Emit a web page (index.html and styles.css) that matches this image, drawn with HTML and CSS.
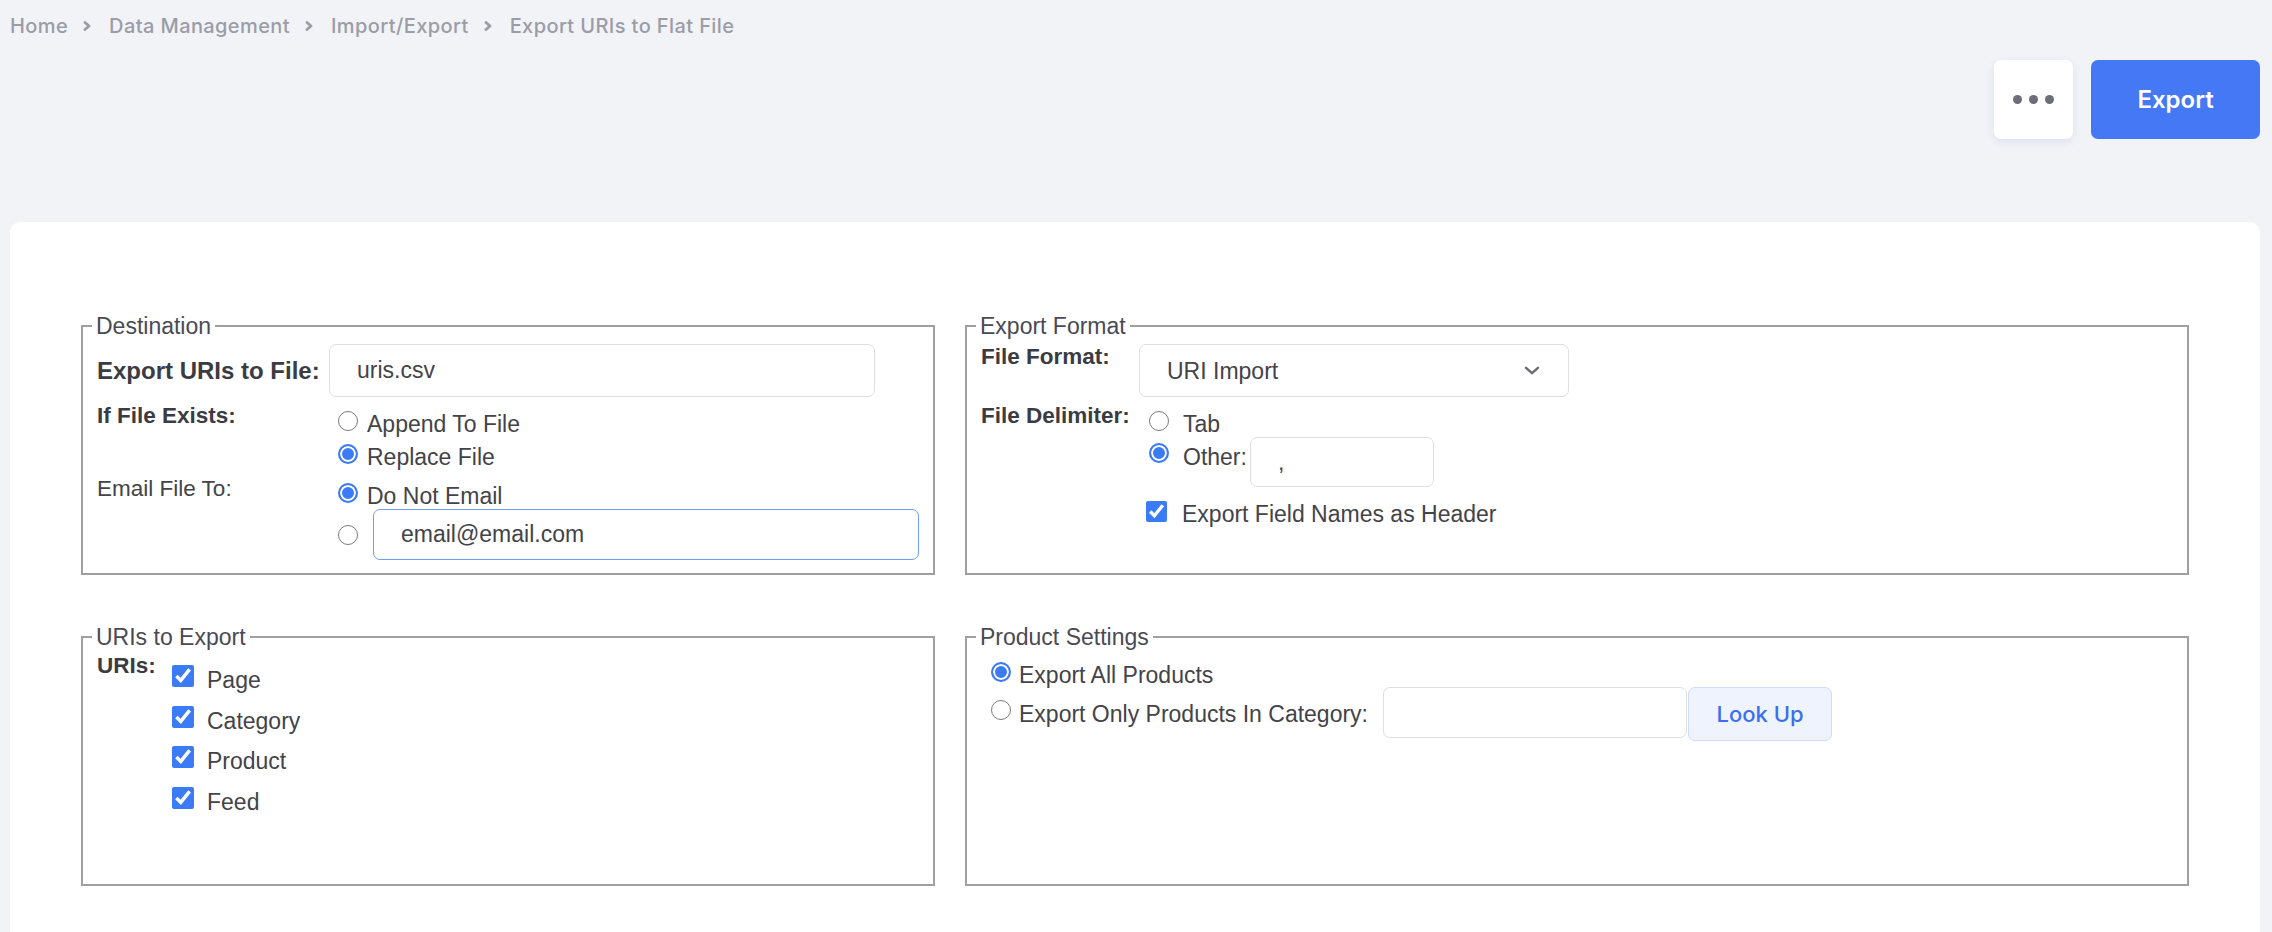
FILE: index.html
```html
<!DOCTYPE html>
<html lang="en">
<head>
    <meta charset="UTF-8">
    <meta name="viewport" content="width=device-width, initial-scale=1.0">
    <title>Export URIs to Flat File</title>
    <link rel="stylesheet" href="styles.css">
</head>
<body>
    <div class="page">
        <nav class="breadcrumb">
            <a href="#">Home</a>
            <svg class="crumb-sep" viewBox="0 0 8 10"><path d="M2 1.5 L6 5 L2 8.5"/></svg>
            <a href="#">Data Management</a>
            <svg class="crumb-sep" viewBox="0 0 8 10"><path d="M2 1.5 L6 5 L2 8.5"/></svg>
            <a href="#">Import/Export</a>
            <svg class="crumb-sep" viewBox="0 0 8 10"><path d="M2 1.5 L6 5 L2 8.5"/></svg>
            <span>Export URIs to Flat File</span>
        </nav>

        <div class="page-actions">
            <button type="button" class="btn-more"><span></span><span></span><span></span></button>
            <button type="button" class="btn-primary">Export</button>
        </div>

        <div class="card">
            <div class="form-grid">
                <!-- where the file goes -->
                <fieldset class="box">
                    <legend>Destination</legend>
                    <div class="dest-grid">
                        <label class="field-label field-label-lg" for="export-file">Export URIs to File:</label>
                        <input id="export-file" class="text-input wide" type="text" value="uris.csv">

                        <span class="field-label">If File Exists:</span>
                        <div class="options">
                            <label class="option"><input type="radio" name="exists"><span>Append To File</span></label>
                            <label class="option"><input type="radio" name="exists" checked><span>Replace File</span></label>
                        </div>

                        <span class="field-label plain">Email File To:</span>
                        <div class="options options-email">
                            <label class="option"><input type="radio" name="email" checked><span>Do Not Email</span></label>
                            <div class="option option-input">
                                <input type="radio" name="email">
                                <input class="text-input wide email-input" type="text" value="email@email.com">
                            </div>
                        </div>
                    </div>
                </fieldset>

                <fieldset class="box">
                    <legend>Export Format</legend>
                    <div class="format-grid">
                        <span class="field-label">File Format:</span>
                        <div class="select-wrap">
                            <select class="text-input select">
                                <option>URI Import</option>
                            </select>
                            <svg class="select-arrow" viewBox="0 0 16 9"><path d="M2 1.8 L8 7.2 L14 1.8"/></svg>
                        </div>

                        <span class="field-label">File Delimiter:</span>
                        <div class="options delim-options">
                            <label class="option"><input type="radio" name="delim"><span>Tab</span></label>
                            <div class="option option-other">
                                <input type="radio" name="delim" checked>
                                <span>Other:</span>
                                <input class="text-input small-input" type="text" value=",">
                            </div>
                            <label class="option option-check"><input type="checkbox" checked><span>Export Field Names as Header</span></label>
                        </div>
                    </div>
                </fieldset>

                <fieldset class="box box-uris">
                    <legend>URIs to Export</legend>
                    <div class="uris-grid">
                        <span class="field-label">URIs:</span>
                        <div class="check-list">
                            <label class="check-row"><input type="checkbox" checked><span>Page</span></label>
                            <label class="check-row"><input type="checkbox" checked><span>Category</span></label>
                            <label class="check-row"><input type="checkbox" checked><span>Product</span></label>
                            <label class="check-row"><input type="checkbox" checked><span>Feed</span></label>
                        </div>
                    </div>
                </fieldset>

                <fieldset class="box">
                    <legend>Product Settings</legend>
                    <div class="product-options">
                        <label class="option option-product"><input type="radio" name="products" checked><span>Export All Products</span></label>
                        <div class="option option-product option-category">
                            <input type="radio" name="products">
                            <span>Export Only Products In Category:</span>
                            <input class="text-input category-input" type="text">
                            <button type="button" class="btn-lookup">Look Up</button>
                        </div>
                    </div>
                </fieldset>
            </div>
        </div>
    </div>
</body>
</html>
```

FILE: styles.css
```css
:root {
    --page-bg: #f2f3f7;
    --primary-color: #4478f5;
    --check-color: #3b7cf6;
    --crumb-color: #9a9ca7;
    --text-color: #434349;
    --label-color: #3a3b43;
    --field-border: #dedfe3;
    --box-border: #a0a0a0;
}

* {
    box-sizing: border-box;
    margin: 0;
    padding: 0;
}

body {
    background-color: var(--page-bg);
    font-family: "Liberation Sans", Arial, sans-serif;
    color: var(--text-color);
}

.page {
    padding: 14px 12px 0 10px;
}

/* breadcrumb */

.breadcrumb {
    display: flex;
    align-items: center;
    height: 24px;
    font-family: Inter, "Liberation Sans", sans-serif;
    font-size: 20px;
    font-weight: 500;
    letter-spacing: 0.4px;
    color: var(--crumb-color);
}

.breadcrumb a {
    color: inherit;
    text-decoration: none;
}

.crumb-sep {
    width: 8px;
    height: 10px;
    margin: 0 18px 0 15px;
    fill: none;
    stroke: var(--crumb-color);
    stroke-width: 2.8;
    stroke-linecap: round;
    stroke-linejoin: round;
}

/* top-right actions */

.page-actions {
    display: flex;
    justify-content: flex-end;
    gap: 18px;
    margin-top: 22px;
}

.btn-more {
    width: 79px;
    height: 79px;
    display: flex;
    align-items: center;
    justify-content: center;
    gap: 7px;
    background: #fff;
    border: none;
    border-radius: 7px;
    box-shadow: 0 3px 8px rgba(70, 100, 200, 0.12);
    cursor: pointer;
}

.btn-more span {
    width: 9px;
    height: 9px;
    border-radius: 50%;
    background: #6c6e78;
}

.btn-primary {
    width: 169px;
    height: 79px;
    background-color: var(--primary-color);
    color: #fff;
    border: none;
    border-radius: 7px;
    font-family: Inter, "Liberation Sans", sans-serif;
    font-size: 24px;
    font-weight: 600;
    cursor: pointer;
}

/* main card */

.card {
    margin-top: 83px;
    background: #fff;
    border-radius: 10px;
    padding: 91px 71px 40px;
    min-height: 720px;
}

.form-grid {
    display: grid;
    grid-template-columns: 854px 1fr;
    column-gap: 30px;
    row-gap: 49px;
}

.box {
    border: 2px solid var(--box-border);
    padding: 5px 14px 14px;
    height: 262px;
    min-width: 0;
}

.box legend {
    font-size: 23px;
    line-height: 26px;
    padding: 0 4px;
    margin-left: -5px;
    color: #4a4a54;
}

.box-uris {
    padding-top: 3px;
}

.field-label {
    font-size: 22.5px;
    line-height: 26px;
    font-weight: 700;
    color: var(--label-color);
}

.field-label-lg {
    font-size: 24px;
    align-self: center;
}

.field-label.plain {
    font-weight: 400;
    font-size: 22.5px;
    color: var(--text-color);
}

.text-input {
    height: 53px;
    padding: 0 27px;
    border: 1px solid var(--field-border);
    border-radius: 7px;
    background: #fff;
    font-family: "Liberation Sans", Arial, sans-serif;
    font-size: 23px;
    color: var(--text-color);
    outline: none;
}

.wide {
    width: 546px;
}

.email-input {
    height: 51px;
    border-color: #6d9ff3;
}

/* radio and checkbox rows */

.options {
    display: flex;
    flex-direction: column;
    row-gap: 7px;
    padding-top: 8px;
}

.option {
    display: flex;
    align-items: flex-start;
    font-size: 23px;
    line-height: 26px;
}

input[type="radio"] {
    appearance: none;
    -webkit-appearance: none;
    flex: none;
    width: 20px;
    height: 20px;
    border: 1.5px solid #7b7b80;
    border-radius: 50%;
    background: #fff;
}

input[type="radio"]:checked {
    border: 2px solid var(--check-color);
    background: var(--check-color);
    box-shadow: inset 0 0 0 2px #fff;
}

.option input[type="radio"] {
    margin: 0 9px;
}

input[type="checkbox"] {
    flex: none;
    accent-color: var(--check-color);
}

.dest-grid {
    display: grid;
    grid-template-columns: 232px 1fr;
    row-gap: 6px;
    align-items: start;
}

.options-email {
    row-gap: 0;
    padding-top: 7px;
}

.option-input {
    align-items: center;
}

.option-input input[type="radio"] {
    margin-right: 15px;
}

/* export format */

.format-grid {
    display: grid;
    grid-template-columns: 158px 1fr;
    row-gap: 6px;
    align-items: start;
}

.select-wrap {
    position: relative;
    width: 430px;
}

.select {
    width: 100%;
    appearance: none;
    -webkit-appearance: none;
}

.select-arrow {
    position: absolute;
    right: 29px;
    top: 22px;
    width: 16px;
    height: 9px;
    fill: none;
    stroke: #6b6b70;
    stroke-width: 2.4;
    stroke-linecap: round;
    stroke-linejoin: round;
    pointer-events: none;
}

.delim-options {
    row-gap: 0;
}

.delim-options .option input[type="radio"] {
    margin: 0 14px 0 10px;
}

.option-other {
    height: 50px;
}

.delim-options .option-other input[type="radio"] {
    margin-top: 6px;
}

.option-other span {
    margin-top: 7px;
}

.small-input {
    width: 184px;
    height: 50px;
    margin-left: 3px;
}

.option-check {
    margin-top: 14px;
}

.option-check input[type="checkbox"] {
    width: 21px;
    height: 21px;
    margin: 0 15px 0 7px;
}

/* uris to export */

.uris-grid {
    display: grid;
    grid-template-columns: 75px 1fr;
    align-items: start;
}

.check-list {
    display: flex;
    flex-direction: column;
    row-gap: 12.5px;
    padding-top: 12px;
}

.check-row {
    display: flex;
    align-items: flex-start;
    font-size: 23px;
    line-height: 26px;
}

.check-row input[type="checkbox"] {
    width: 22px;
    height: 22px;
    margin: 0 13px 0 0;
}

.check-row span {
    margin-top: 2px;
}

/* product settings */

.product-options {
    padding-top: 7px;
}

.option-product {
    height: 25px;
}

.option-product input[type="radio"] {
    margin: 0 8px 0 10px;
}

.option-category {
    height: 54px;
}

.option-category input[type="radio"] {
    margin-top: 13px;
}

.option-category span {
    margin-top: 14px;
}

.category-input {
    width: 304px;
    height: 51px;
    margin-left: 15px;
}

.btn-lookup {
    width: 144px;
    height: 54px;
    margin-left: 1px;
    background: #eef3fe;
    border: 1px solid #cddcf9;
    border-radius: 7px;
    color: #3b6ff0;
    font-family: Inter, "Liberation Sans", sans-serif;
    font-size: 22px;
    font-weight: 500;
    cursor: pointer;
}
```
